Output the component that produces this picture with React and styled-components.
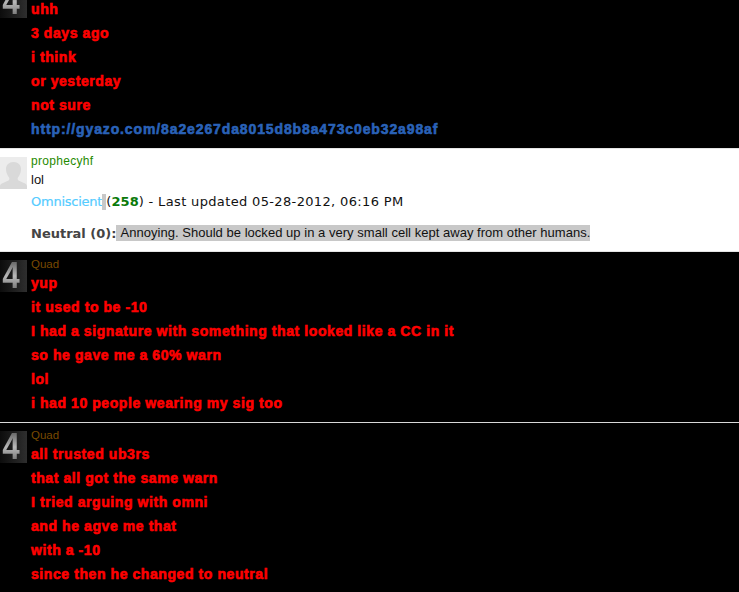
import styled, { createGlobalStyle } from "styled-components";

const Global = createGlobalStyle`
  html, body {
    margin: 0;
    padding: 0;
    background: #000;
    overflow: hidden;
  }
`;

const Page = styled.div`
  width: 739px;
  height: 592px;
  overflow: hidden;
  background: #000;
  font-family: "Liberation Sans", Arial, sans-serif;
`;

const Thread = styled.div`
  display: flex;
  flex-direction: column;
  margin-top: -22px;
`;

const Post = styled.div`
  display: flex;
  align-items: flex-start;
  background: ${(p) => (p.$light ? "#fff" : "#000")};
  border-top: ${(p) => (p.$light ? "1px solid #e4e4e4" : "none")};
  border-bottom: ${(p) => (p.$line ? "1px solid #d8d8d8" : p.$light ? "1px solid #e4e4e4" : "none")};
  padding: 8px 0 ${(p) => (p.$light ? 6 : 7)}px;
`;

const Avatar = styled.div`
  flex: none;
  width: 27px;
  height: 32px;
  display: flex;
  align-items: center;
  justify-content: center;
  background: linear-gradient(90deg, #0c0c0c 0%, #2e2e2e 100%);
`;

const Four = styled.span`
  display: block;
  font-size: 36px;
  font-weight: bold;
  line-height: 32px;
  transform: translateX(-2px) scaleX(0.88);
  background: linear-gradient(180deg, #5e5e5e 0%, #b8b8b8 50%, #6a6a6a 100%);
  -webkit-background-clip: text;
  background-clip: text;
  color: transparent;
`;

const Ghost = styled.div`
  flex: none;
  width: 27px;
  height: 32px;
  background: #ececec;
  svg {
    display: block;
  }
`;

const Body = styled.div`
  flex: 1;
  min-width: 0;
  margin-top: -2px;
  padding-left: 4px;
  padding-top: ${(p) => (p.$noName ? 13 : 0)}px;
`;

const Name = styled.div`
  font-size: ${(p) => p.$size}px;
  letter-spacing: ${(p) => p.$track || 0}px;
  line-height: 13px;
  height: 13px;
  color: ${(p) => p.$color};
  margin-bottom: ${(p) => p.$gap || 0}px;
`;

const Shout = styled.div`
  font-size: 14px;
  font-weight: bold;
  line-height: 24px;
  color: ${(p) => p.$color || "#f00"};
  -webkit-text-stroke: 0.6px ${(p) => p.$color || "#f00"};
  letter-spacing: ${(p) => p.$track || 0.58}px;
  white-space: nowrap;
`;

const Plain = styled.div`
  font-size: 13px;
  line-height: 16px;
  color: #111;
`;

const RepLine = styled.div`
  font-family: "DejaVu Sans", Verdana, sans-serif;
  font-size: 13px;
  line-height: 16px;
  letter-spacing: 0.35px;
  color: #111;
  margin-top: 6px;
  white-space: nowrap;
`;

const Rank = styled.span`
  color: #55ccff;
  letter-spacing: -0.25px;
  -webkit-text-stroke: 0.2px #55ccff;
`;

const Caret = styled.span`
  display: inline-block;
  width: 4px;
  height: 16px;
  background: #c8c8c8;
  vertical-align: top;
`;

const Score = styled.b`
  color: #0a7a0a;
  letter-spacing: 0;
`;

const Verdict = styled.div`
  margin-top: 15px;
  padding-bottom: 4px;
  display: flex;
  align-items: center;
  white-space: nowrap;
`;

const VerdictLabel = styled.b`
  font-family: "DejaVu Sans", Verdana, sans-serif;
  font-size: 13px;
  color: #444;
`;

const Selected = styled.span`
  font-size: 13px;
  line-height: 16px;
  letter-spacing: 0.03px;
  color: #111;
  background: #c8c8c8;
  padding-left: 4px;
`;

function Clan() {
  return (
    <Avatar>
      <Four>4</Four>
    </Avatar>
  );
}

const firstPost = ["uhh", "3 days ago", "i think", "or yesterday", "not sure"];
const secondPost = [
  "yup",
  "it used to be -10",
  "I had a signature with something that looked like a CC in it",
  "so he gave me a 60% warn",
  "lol",
  "i had 10 people wearing my sig too",
];
const thirdPost = [
  "all trusted ub3rs",
  "that all got the same warn",
  "I tried arguing with omni",
  "and he agve me that",
  "with a -10",
  "since then he changed to neutral",
];

export default function App() {
  return (
    <Page>
      <Global />
      <Thread>
        <Post>
          <Clan />
          <Body $noName>
            {firstPost.map((line) => (
              <Shout key={line}>{line}</Shout>
            ))}
            <Shout $color="#2a62b8" $track={0.88}>http://gyazo.com/8a2e267da8015d8b8a473c0eb32a98af</Shout>
          </Body>
        </Post>
        <Post $light>
          <Ghost>
            <svg width="27" height="32" viewBox="0 0 27 32">
              <path
                d="M0 32v-3c0-3 7-4 9-6 1-1 0-3-1-4-1-2-2-4-2-7 0-4 3-7 7.500-7s7.500 3 7.500 7c0 3-1 5-2 7-1 1-2 3-1 4 2 2 9 3 9 6v3z"
                fill="#d9d9d9"
              />
            </svg>
          </Ghost>
          <Body>
            <Name $color="#1f8a00" $size={12} $track={0.3} $gap={4}>prophecyhf</Name>
            <Plain>lol</Plain>
            <RepLine>
              <Rank>Omniscient</Rank>
              <Caret />(<Score>258</Score>) - Last updated 05-28-2012, 06:16 PM
            </RepLine>
            <Verdict>
              <VerdictLabel>Neutral (0):</VerdictLabel>
              <Selected>Annoying. Should be locked up in a very small cell kept away from other humans.</Selected>
            </Verdict>
          </Body>
        </Post>
        <Post $line>
          <Clan />
          <Body>
            <Name $color="#7a4a00" $size={11.5}>Quad</Name>
            {secondPost.map((line) => (
              <Shout key={line}>{line}</Shout>
            ))}
          </Body>
        </Post>
        <Post>
          <Clan />
          <Body>
            <Name $color="#7a4a00" $size={11.5}>Quad</Name>
            {thirdPost.map((line) => (
              <Shout key={line}>{line}</Shout>
            ))}
          </Body>
        </Post>
      </Thread>
    </Page>
  );
}
